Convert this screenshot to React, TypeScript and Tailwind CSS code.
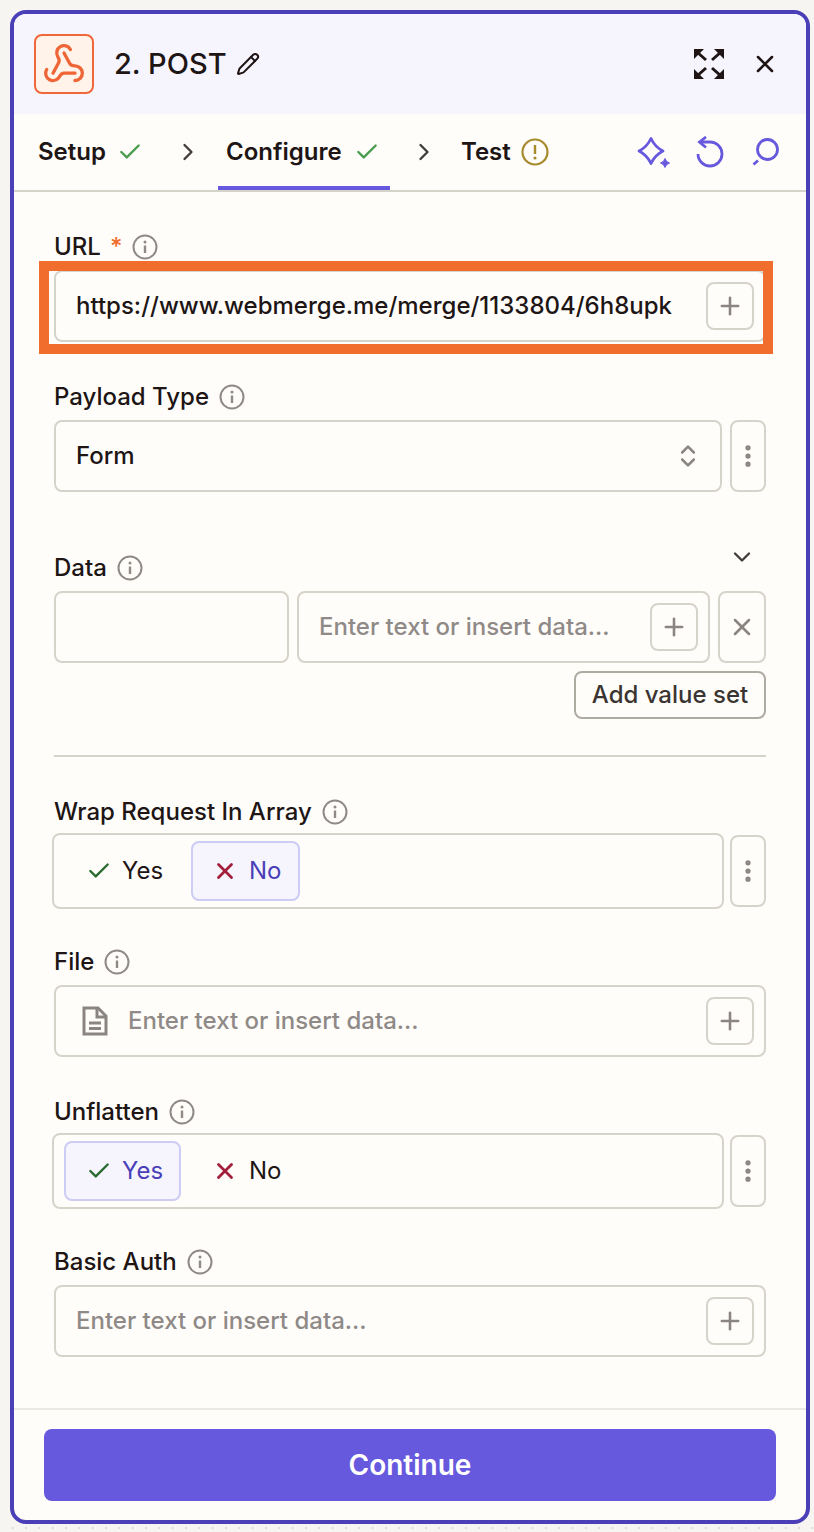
import React from "react";
import { Check, ChevronRight, ChevronDown, ChevronsUpDown, EllipsisVertical, Pencil, Plus, Webhook, X } from "lucide-react";

function InfoIcon() {
  return (
    <svg viewBox="0 0 26 26" className="w-[26px] h-[26px] shrink-0" fill="none">
      <circle cx="13" cy="13" r="11.5" stroke="#8f8a87" strokeWidth="2" />
      <circle cx="13" cy="8" r="1.5" fill="#8f8a87" />
      <path d="M13 11.5v7.5" stroke="#8f8a87" strokeWidth="2.4" />
    </svg>
  );
}

function Label({ text, required, tight }: { text: string; required?: boolean; tight?: boolean }) {
  return (
    <div className={`flex items-center h-8 text-[24px] leading-8 font-medium text-[#201515] ${tight ? "mb-[5px]" : "mb-[7px]"}`}>
      <span>{text}</span>
      {required && <span className="ml-[9px] text-[#f06d2d]">*</span>}
      <span className="ml-[10px]">
        <InfoIcon />
      </span>
    </div>
  );
}

function PlusButton() {
  return (
    <button className="w-[48px] h-[48px] shrink-0 flex items-center justify-center rounded-lg border-2 border-[#d6d4ca]">
      <Plus className="w-7 h-7 text-[#8a8582]" strokeWidth={2.2} />
    </button>
  );
}

function Kebab() {
  return (
    <button className="w-[36px] h-[72px] shrink-0 flex items-center justify-center rounded-lg border-2 border-[#d6d4ca]">
      <EllipsisVertical className="w-7 h-7 text-[#8a8582]" strokeWidth={2.5} />
    </button>
  );
}

function Toggle({ selected }: { selected: "yes" | "no" }) {
  const on = "bg-[#f6f5fd] border-[#ccccf5] text-[#4a3fb8]";
  const off = "border-transparent text-[#201515]";
  return (
    <div className="flex items-center gap-[6px]">
      <div className="-ml-[2px] w-[672px] h-[76px] flex items-center gap-[10px] px-[10px] rounded-lg border-2 border-[#d6d4ca]">
        <div className={`w-[117px] h-[60px] flex items-center pl-[20px] gap-[10px] rounded-lg border-2 text-[24px] ${selected === "yes" ? on : off}`}>
          <Check className="w-[26px] h-[26px] text-[#2a6b31]" strokeWidth={2.2} />
          Yes
        </div>
        <div className={`w-[109px] h-[60px] flex items-center pl-[19px] gap-[11px] rounded-lg border-2 text-[24px] ${selected === "no" ? on : off}`}>
          <X className="w-[26px] h-[26px] text-[#a3203a]" strokeWidth={2.6} />
          No
        </div>
      </div>
      <Kebab />
    </div>
  );
}

function TextField({ placeholder, value }: { placeholder?: string; value?: string }) {
  return (
    <div className="h-[72px] flex items-center pl-5 pr-[10px] rounded-lg border-2 border-[#d6d4ca]">
      <span className={`flex-1 text-[24px] font-medium ${value ? "text-[#201515]" : "text-[#8f8a87]"}`}>{value || placeholder}</span>
      <PlusButton />
    </div>
  );
}

export default function App() {
  return (
    <div className="w-[814px] h-[1532px] bg-[#f7f5f2] pt-[10px] px-[10px] overflow-hidden font-['Inter',sans-serif]">
      <div className="w-[800px] h-[1514px] flex flex-col border-4 border-[#4b3fb8] rounded-2xl bg-[#fffdf9] overflow-hidden">
        {/* Header */}
        <div className="h-[100px] shrink-0 flex items-center bg-[#f6f5fd] pl-5 pr-[27px]">
          <div className="w-[60px] h-[60px] flex items-center justify-center rounded-lg border-2 border-[#f0673a] bg-[#fff3ea]">
            <Webhook className="w-[44px] h-[44px] text-[#ee6536]" strokeWidth={1.8} />
          </div>
          <span className="ml-[20px] text-[29px] font-medium text-[#201515]">2. POST</span>
          <Pencil className="ml-[9px] w-[24px] h-[24px] text-[#201515]" strokeWidth={2} />
          <svg viewBox="0 0 30 30" className="ml-auto w-[30px] h-[30px] text-[#201515]" fill="currentColor" stroke="currentColor" strokeWidth="0">
            <path d="M0 0h10L0 10z" />
            <path d="M3 3l9 8" fill="none" strokeWidth="3" />
            <path d="M30 0v10L20 0z" />
            <path d="M27 3l-9 8" fill="none" strokeWidth="3" />
            <path d="M0 30V20l10 10z" />
            <path d="M3 27l9-8" fill="none" strokeWidth="3" />
            <path d="M30 30H20l10-10z" />
            <path d="M27 27l-9-8" fill="none" strokeWidth="3" />
          </svg>
          <X className="ml-[27px] w-[28px] h-[28px] text-[#201515]" strokeWidth={2.2} />
        </div>

        {/* Tabs */}
        <div className="h-[78px] shrink-0 flex items-start border-b-2 border-[#d6d4ca] pl-6 pr-[26px] text-[24px] font-semibold text-[#201515]">
          <div className="h-[76px] flex items-center">
            Setup
            <Check className="ml-[11px] w-[26px] h-[26px] text-[#4a9d4e]" strokeWidth={2.2} />
          </div>
          <div className="h-[76px] flex items-center ml-[31px]">
            <ChevronRight className="w-[28px] h-[28px] text-[#403c3a]" strokeWidth={2} />
          </div>
          <div className="h-[76px] w-[172px] ml-[16px] flex items-center pl-2 pt-1 border-b-4 border-[#6759de]">
            Configure
            <Check className="ml-[12px] w-[26px] h-[26px] text-[#4a9d4e]" strokeWidth={2.2} />
          </div>
          <div className="h-[76px] flex items-center ml-[20px]">
            <ChevronRight className="w-[28px] h-[28px] text-[#403c3a]" strokeWidth={2} />
          </div>
          <div className="h-[76px] flex items-center ml-[23px]">
            Test
            <svg viewBox="0 0 28 28" className="ml-[10px] w-[28px] h-[28px]" fill="none">
              <circle cx="14" cy="14" r="12.5" stroke="#a68b2c" strokeWidth="2.2" />
              <path d="M14 7v9" stroke="#a68b2c" strokeWidth="2.4" />
              <circle cx="14" cy="20" r="1.6" fill="#a68b2c" />
            </svg>
          </div>
          <div className="h-[76px] flex items-center ml-auto text-[#6759de]">
            <svg viewBox="0 0 34 33" className="w-[34px] h-[33px]" fill="none" stroke="currentColor" strokeWidth="2.8" strokeLinejoin="round">
              <path d="M14 2.500Q18 11 26 15Q18 19 14 27.500Q10 19 2 15Q10 11 14 2.500z" />
              <path d="M28 22.500Q29 26 32.500 27Q29 28 28 31.500Q27 28 23.500 27Q27 26 28 22.500z" fill="currentColor" strokeWidth="1" />
            </svg>
            <svg viewBox="0 0 28 32" className="ml-[25px] w-[28px] h-[32px]" fill="none" stroke="currentColor" strokeWidth="2.8">
              <path d="M2 18A12 12 0 1 0 14 6H4" />
              <path d="M10 1 3.500 6l6.500 5.500" />
            </svg>
            <svg viewBox="0 0 28 28" className="ml-[28px] w-[28px] h-[28px]" fill="none" stroke="currentColor" strokeWidth="2.8">
              <circle cx="15.500" cy="11.500" r="10" />
              <path d="M1.500 26.500l4.500-4" />
            </svg>
          </div>
        </div>

        {/* Fields */}
        <div className="flex-1 pt-[39px] pl-10 pr-10">
          <Label text="URL" required />
          <div className="relative">
            <TextField value="https://www.webmerge.me/merge/1133804/6h8upk" />
            <div className="absolute -left-[15px] -right-[7px] -top-[9px] -bottom-[12px] border-[10px] border-[#f06d2d] pointer-events-none" />
          </div>

          <div className="mt-[39px]">
            <Label text="Payload Type" />
            <div className="flex gap-2">
              <div className="flex-1 h-[72px] flex items-center justify-between pl-5 pr-[18px] rounded-lg border-2 border-[#d6d4ca] text-[24px] font-medium text-[#201515]">
                Form
                <ChevronsUpDown className="w-7 h-7 text-[#8a8582]" strokeWidth={2.2} />
              </div>
              <Kebab />
            </div>
          </div>

          <div className="mt-[60px] relative">
            <Label text="Data" />
            <ChevronDown className="absolute right-[10px] -top-[9px] w-7 h-7 text-[#403c3a]" strokeWidth={2} />
            <div className="flex gap-2">
              <div className="w-[235px] h-[72px] rounded-lg border-2 border-[#d6d4ca]" />
              <div className="w-[413px] h-[72px] flex items-center pl-5 pr-[10px] rounded-lg border-2 border-[#d6d4ca]">
                <span className="flex-1 text-[24px] font-medium text-[#8f8a87]">Enter text or insert data...</span>
                <PlusButton />
              </div>
              <button className="w-[48px] h-[72px] flex items-center justify-center rounded-lg border-2 border-[#d6d4ca]">
                <X className="w-7 h-7 text-[#8a8582]" strokeWidth={2.2} />
              </button>
            </div>
            <div className="mt-2 flex justify-end">
              <button className="w-[192px] h-[48px] rounded-lg border-2 border-[#aeaba2] text-[24px] font-medium text-[#3a3532]">Add value set</button>
            </div>
          </div>

          <div className="mt-[36px] h-[2px] bg-[#d6d4ca]" />

          <div className="mt-[39px]">
            <Label text="Wrap Request In Array" tight />
            <Toggle selected="no" />
          </div>

          <div className="mt-[37px]">
            <Label text="File" />
            <div className="h-[72px] flex items-center pl-[26px] pr-[10px] rounded-lg border-2 border-[#d6d4ca]">
              <svg viewBox="0 0 26 30" className="w-[26px] h-[30px] shrink-0" fill="none" stroke="#8a8582" strokeWidth="3">
                <path d="M2 2h14l8 8v18H2z" />
                <path d="M15 2v9h9M7 17h12M7 22.500h12" />
              </svg>
              <span className="flex-1 ml-[20px] text-[24px] font-medium text-[#8f8a87]">Enter text or insert data...</span>
              <PlusButton />
            </div>
          </div>

          <div className="mt-[39px]">
            <Label text="Unflatten" tight />
            <Toggle selected="yes" />
          </div>

          <div className="mt-[37px]">
            <Label text="Basic Auth" />
            <TextField placeholder="Enter text or insert data..." />
          </div>
        </div>

        {/* Footer */}
        <div className="shrink-0 border-t-2 border-[#ebe9e3] pt-[19px] pb-[19px] px-[30px]">
          <button className="w-full h-[72px] rounded-lg bg-[#6759de] text-[28px] font-semibold text-white">Continue</button>
        </div>
      </div>
      <div className="mt-[1px] h-[6px] bg-[radial-gradient(circle,#dedbd4_1px,transparent_1.2px)] bg-[length:13.33px_6px] -ml-[4px] -mr-[10px]" />
    </div>
  );
}
